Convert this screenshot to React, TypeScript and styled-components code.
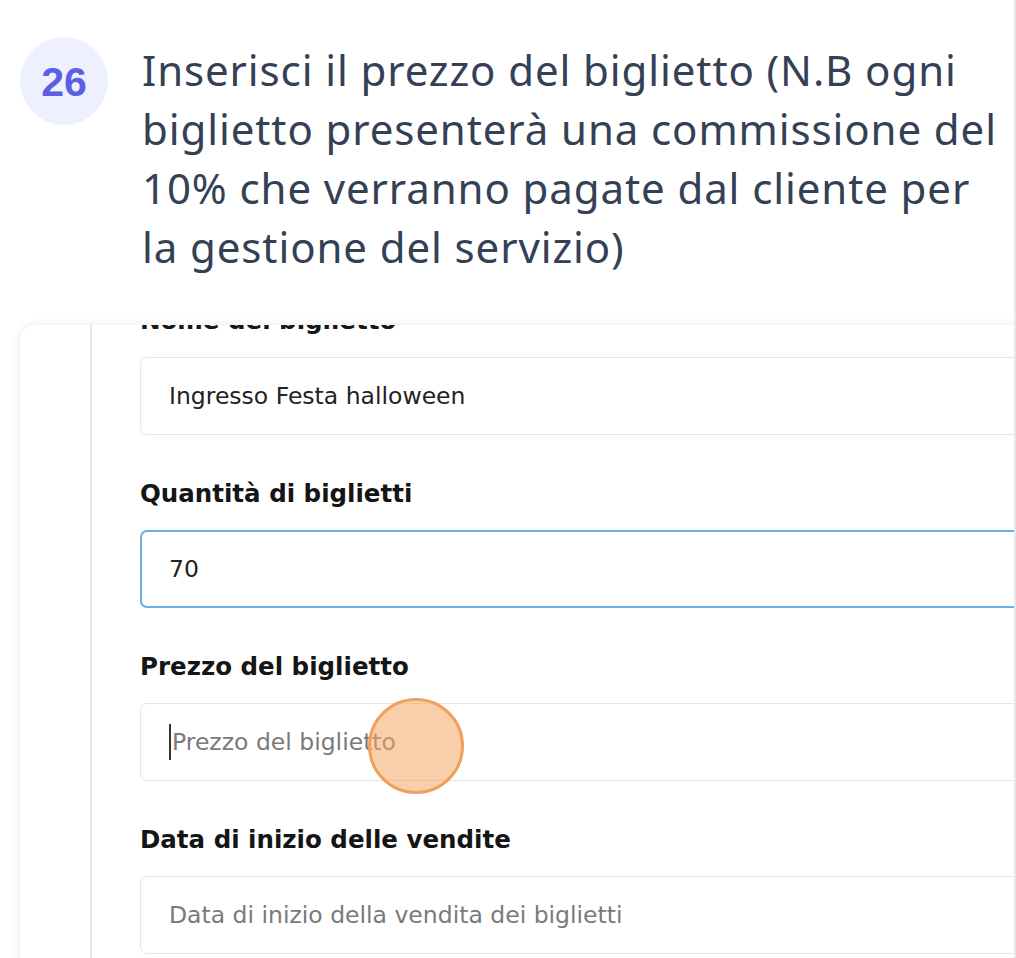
import React from "react";
import styled, { createGlobalStyle } from "styled-components";

const Global = createGlobalStyle`
  html, body { margin: 0; padding: 0; background: #ffffff; }
  body { overflow: hidden; }
`;

const Page = styled.div`
  width: 1016px;
  height: 958px;
  box-sizing: border-box;
  border-right: 2px solid #e8e8ea;
  overflow: hidden;
  background: #fff;
`;

const Step = styled.div`
  display: flex;
  align-items: flex-start;
  gap: 34px;
  padding: 37px 0 0 20px;
`;

const Badge = styled.div`
  flex: none;
  width: 88px;
  height: 88px;
  border-radius: 50%;
  background: #eef0fd;
  color: #5b5fe4;
  display: flex;
  align-items: center;
  justify-content: center;
  font-family: "Liberation Sans", Arial, sans-serif;
  font-weight: 700;
  font-size: 41px;
  padding-top: 2px;
  box-sizing: border-box;
`;

const Heading = styled.div`
  font-family: "Noto Sans", "Open Sans", sans-serif;
  font-size: 42px;
  line-height: 59px;
  letter-spacing: 0.9px;
  color: #344155;
  margin-top: 3px;
  width: 872px;
`;

const Card = styled.div`
  margin: 49px -40px 0 20px;
  height: 700px;
  border-radius: 16px 0 0 0;
  box-shadow: 0 -2px 10px rgba(0, 0, 0, 0.05), -2px 0 8px rgba(0, 0, 0, 0.03);
  overflow: hidden;
  display: flex;
  background: #fff;
`;

const Rail = styled.div`
  flex: none;
  width: 70px;
  border-right: 2px solid #e3e3e5;
`;

const Form = styled.div`
  flex: 1;
  padding-left: 48px;
  margin-top: -19px;
  display: flex;
  flex-direction: column;
  font-family: "DejaVu Sans", "Noto Sans", sans-serif;
`;

const Group = styled.div`
  display: flex;
  flex-direction: column;
  margin-bottom: 44px;
`;

const Label = styled.div`
  font-size: 24.5px;
  line-height: 30px;
  font-weight: 700;
  color: #151515;
  margin-bottom: 21px;
  white-space: nowrap;
`;

const Field = styled.div<{ $focused?: boolean }>`
  position: relative;
  height: 78px;
  box-sizing: border-box;
  border: ${(p) => (p.$focused ? "2px solid #6aaee4" : "1px solid #e6e6e8")};
  border-radius: 7px;
  padding-left: ${(p) => (p.$focused ? "27px" : "28px")};
  display: flex;
  align-items: center;
  font-size: 23.5px;
  background: #fff;
  white-space: nowrap;
`;

const Value = styled.span`
  color: #222;
`;

const Placeholder = styled.span`
  color: #7a7a7a;
`;

const Caret = styled.span`
  display: inline-block;
  width: 2px;
  height: 36px;
  background: #333;
  margin-right: 1px;
  vertical-align: middle;
`;

const Touch = styled.div`
  position: absolute;
  left: 227px;
  top: -6px;
  width: 96px;
  height: 96px;
  box-sizing: border-box;
  border-radius: 50%;
  border: 3px solid #ef9f5e;
  background: rgba(243, 168, 96, 0.55);
`;

export default function App() {
  return (
    <>
      <Global />
      <Page>
        <Step>
          <Badge>26</Badge>
          <Heading>
            Inserisci il prezzo del biglietto (N.B ogni biglietto presenterà una commissione del 10% che verranno pagate dal cliente per la gestione del servizio)
          </Heading>
        </Step>
        <Card>
          <Rail />
          <Form>
            <Group>
              <Label>Nome del biglietto</Label>
              <Field>
                <Value>Ingresso Festa halloween</Value>
              </Field>
            </Group>
            <Group>
              <Label>Quantità di biglietti</Label>
              <Field $focused>
                <Value>70</Value>
              </Field>
            </Group>
            <Group>
              <Label>Prezzo del biglietto</Label>
              <Field>
                <Caret />
                <Placeholder>Prezzo del biglietto</Placeholder>
                <Touch />
              </Field>
            </Group>
            <Group>
              <Label>Data di inizio delle vendite</Label>
              <Field>
                <Placeholder>Data di inizio della vendita dei biglietti</Placeholder>
              </Field>
            </Group>
          </Form>
        </Card>
      </Page>
    </>
  );
}
